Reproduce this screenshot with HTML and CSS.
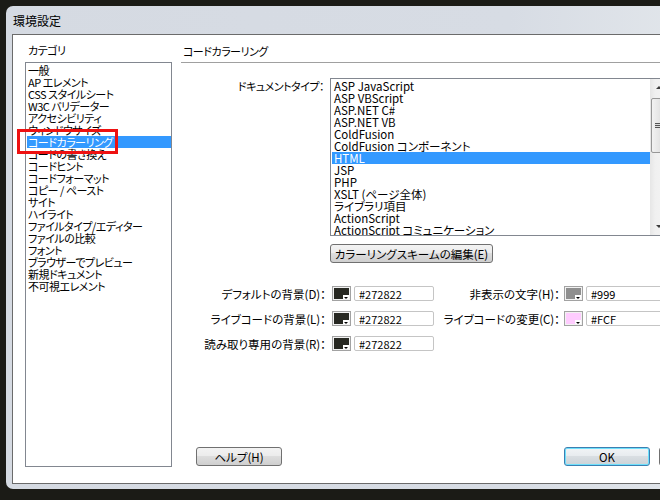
FILE: index.html
```html
<!DOCTYPE html>
<html lang="ja">
<head>
<meta charset="utf-8">
<title>環境設定</title>
<link rel="stylesheet" href="styles.css">
</head>
<body>
<div class="window">
  <div class="titlebar">環境設定</div>
  <div class="content">
    <div class="left">
      <div class="cat-label">カテゴリ</div>
      <ul class="catlist">
        <li>一般</li>
        <li>AP エレメント</li>
        <li>CSS スタイルシート</li>
        <li>W3C バリデーター</li>
        <li>アクセシビリティ</li>
        <li>ウィンドウサイズ</li>
        <li class="sel">コードカラーリング</li>
        <li>コードの書き換え</li>
        <li>コードヒント</li>
        <li>コードフォーマット</li>
        <li>コピー / ペースト</li>
        <li>サイト</li>
        <li>ハイライト</li>
        <li>ファイルタイプ/エディター</li>
        <li>ファイルの比較</li>
        <li>フォント</li>
        <li>ブラウザーでプレビュー</li>
        <li>新規ドキュメント</li>
        <li>不可視エレメント</li>
      </ul>
    </div>
    <div class="right">
      <div class="heading">コードカラーリング</div>
      <div class="doc-row">
        <div class="doc-label">ドキュメントタイプ：</div>
        <div class="doclist">
          <ul class="docitems">
            <li>ASP JavaScript</li>
            <li>ASP VBScript</li>
            <li>ASP.NET C#</li>
            <li>ASP.NET VB</li>
            <li>ColdFusion</li>
            <li>ColdFusion コンポーネント</li>
            <li class="sel">HTML</li>
            <li>JSP</li>
            <li>PHP</li>
            <li>XSLT (ページ全体)</li>
            <li>ライブラリ項目</li>
            <li>ActionScript</li>
            <li>ActionScript コミュニケーション</li>
          </ul>
          <div class="scrollbar">
            <div class="sb-btn"><span class="tri-up"></span></div>
            <div class="thumb"><span class="grip"></span></div>
            <div class="track"></div>
            <div class="sb-btn"><span class="tri-down"></span></div>
          </div>
        </div>
      </div>
      <div class="scheme-row">
        <button class="btn scheme">カラーリングスキームの編集(E)</button>
      </div>
      <div class="colors">
        <div class="c-label">デフォルトの背景(D)：</div>
        <div class="swatch"><span class="fill dark"></span></div>
        <div class="tfield">#272822</div>
        <div class="c-label r">非表示の文字(H)：</div>
        <div class="swatch"><span class="fill gray"></span></div>
        <div class="tfield wide">#999</div>

        <div class="c-label">ライブコードの背景(L)：</div>
        <div class="swatch"><span class="fill dark"></span></div>
        <div class="tfield">#272822</div>
        <div class="c-label r">ライブコードの変更(C)：</div>
        <div class="swatch"><span class="fill pink"></span></div>
        <div class="tfield wide">#FCF</div>

        <div class="c-label">読み取り専用の背景(R)：</div>
        <div class="swatch"><span class="fill dark"></span></div>
        <div class="tfield">#272822</div>
      </div>
      <div class="spacer"></div>
      <div class="buttons">
        <button class="btn help">ヘルプ(H)</button>
        <button class="btn ok">OK</button>
        <button class="btn cancel">キャンセル</button>
      </div>
    </div>
  </div>
</div>
<div class="annot"></div>
</body>
</html>
```
FILE: styles.css
```css
html, body {
  margin: 0;
  padding: 0;
}
body {
  width: 660px;
  height: 500px;
  overflow: hidden;
  background: #1b1b16;
  font-family: "Noto Sans CJK JP", "Noto Sans", sans-serif;
  font-size: 11.5px;
  line-height: 12px;
  letter-spacing: 0;
  font-feature-settings: "palt";
  color: #000;
  position: relative;
}
ul {
  list-style: none;
  margin: 0;
  padding: 0;
}
.window {
  margin: 6px 0 0 6px;
  width: 720px;
  height: 483px;
  box-sizing: border-box;
  background: linear-gradient(to right, #d5dae2 0%, #d7dce4 70%, #e4e8ec 100%);
  border-radius: 7px 7px 0 7px;
  padding: 0 0 5px 0;
  display: flex;
  flex-direction: column;
}
.titlebar {
  height: 28px;
  box-sizing: border-box;
  padding: 9px 0 0 7px;
  line-height: 12px;
  font-size: 12px;
  font-feature-settings: normal;
}
.content {
  margin-left: 6px;
  flex: 1;
  background: #fff;
  border: 1px solid #6b6b6b;
  border-right: none;
  display: flex;
  padding-left: 12px;
}
.left {
  width: 147px;
  flex-shrink: 0;
  display: flex;
  flex-direction: column;
}
.cat-label {
  height: 27px;
  box-sizing: border-box;
  padding: 9px 0 0 3px;
  font-size: 11px;
  letter-spacing: -0.5px;
}
.catlist {
  height: 405px;
  box-sizing: border-box;
  border: 1px solid #828790;
  padding-top: 1px;
  font-size: 11px;
  letter-spacing: -0.5px;
}
.catlist li {
  height: 12px;
  margin-left: 1px;
  padding-left: 1px;
  white-space: nowrap;
}
.sel {
  background: #3399ff;
  color: #fff;
}
.right {
  margin-left: 9px;
  width: 620px;
  flex-shrink: 0;
  display: flex;
  flex-direction: column;
}
.heading {
  padding: 10px 0 0 2px;
  height: 17px;
  font-size: 11px;
  letter-spacing: -0.5px;
  border-bottom: 1px solid #a0a0a0;
}
.doc-row {
  display: flex;
  margin-top: 15px;
}
.doc-label {
  width: 149px;
  flex-shrink: 0;
  box-sizing: border-box;
  padding: 2px 6px 0 0;
  text-align: right;
  white-space: nowrap;
  font-size: 11px;
  letter-spacing: -0.5px;
}
.doclist {
  width: 338px;
  flex-shrink: 0;
  height: 158px;
  box-sizing: border-box;
  border: 1px solid #828790;
  display: flex;
}
.docitems {
  flex: 1;
  padding-top: 1px;
  overflow: hidden;
}
.docitems li {
  height: 12px;
  margin-left: 1px;
  padding-left: 2px;
  white-space: nowrap;
}
.scrollbar {
  width: 17px;
  flex-shrink: 0;
  background: linear-gradient(to right, #e6e6e6, #f0f0f0 30%, #f4f4f4);
  display: flex;
  flex-direction: column;
}
.sb-btn {
  height: 17px;
  display: flex;
  align-items: center;
  justify-content: center;
}
.tri-up {
  width: 0;
  height: 0;
  border-left: 3px solid transparent;
  border-right: 3px solid transparent;
  border-bottom: 3px solid #3c3c3c;
}
.tri-down {
  width: 0;
  height: 0;
  border-left: 3px solid transparent;
  border-right: 3px solid transparent;
  border-top: 3px solid #3c3c3c;
}
.thumb {
  margin: 2px 1px 0 1px;
  height: 55px;
  box-sizing: border-box;
  border: 1px solid #979797;
  border-radius: 2px;
  background: linear-gradient(to right, #f2f2f2, #e6e6e6 50%, #d6d6d6);
  display: flex;
  align-items: center;
  justify-content: center;
}
.grip {
  width: 7px;
  height: 5px;
  background: repeating-linear-gradient(to bottom, #555 0, #555 1px, #ddd 1px, #ddd 2px);
}
.track {
  flex: 1;
}
.scheme-row {
  margin-top: 8px;
  padding-left: 149px;
  display: flex;
}
.btn {
  font-family: inherit;
  font-size: 11.5px;
  line-height: 12px;
  font-feature-settings: "palt";
  color: #000;
  height: 19px;
  padding: 0;
  flex-shrink: 0;
  box-sizing: border-box;
  border: 1px solid #707070;
  border-radius: 3px;
  background: linear-gradient(to bottom, #f3f3f3 0%, #ececec 45%, #dddddd 50%, #cfcfcf 100%);
}
.scheme {
  width: 163px;
}
.colors {
  margin-top: 23px;
  display: grid;
  grid-template-columns: 151px 22px 80px 130px 22px 90px;
  grid-auto-rows: 15px;
  row-gap: 10px;
}
.c-label {
  text-align: right;
  padding: 2px 6px 0 0;
  white-space: nowrap;
}
.c-label.r {
  padding-right: 4px;
}
.swatch {
  width: 19px;
  height: 15px;
  box-sizing: border-box;
  border: 1px solid #a2a2a2;
  background: #f2f2f2;
  padding: 1px;
  position: relative;
}
.fill {
  display: block;
  width: 100%;
  height: 100%;
}
.fill.dark { background: #272822; }
.fill.gray { background: #8f8f8f; }
.fill.pink { background: #ffccff; }
.swatch::after {
  content: "";
  position: absolute;
  right: 1px;
  bottom: 1px;
  width: 6px;
  height: 4px;
  background: #fff;
}
.swatch::before {
  content: "";
  position: absolute;
  right: 2px;
  bottom: 1px;
  width: 0;
  height: 0;
  border-left: 2px solid transparent;
  border-right: 2px solid transparent;
  border-top: 2px solid #000;
  z-index: 1;
}
.tfield {
  height: 15px;
  box-sizing: border-box;
  border: 1px solid #c5c5c5;
  border-radius: 2px;
  padding: 1px 0 0 4px;
  font-size: 11px;
  line-height: 12px;
}
.tfield.wide {
  width: 90px;
}
.spacer {
  flex: 1;
}
.buttons {
  display: flex;
  margin-bottom: 17px;
  padding-left: 15px;
}
.help {
  width: 86px;
}
.ok {
  width: 86px;
  margin-left: 282px;
  border-color: #3c7fb1;
  box-shadow: inset 0 0 0 1px #6ee0fc;
  background: linear-gradient(to bottom, #f1f4f6 0%, #e8ecef 45%, #d9dee2 50%, #ccd3d8 100%);
}
.cancel {
  width: 86px;
  margin-left: 9px;
}
.annot {
  position: absolute;
  left: 17px;
  top: 129px;
  width: 101px;
  height: 25px;
  box-sizing: border-box;
  border: 3px solid #ee1111;
}
```
